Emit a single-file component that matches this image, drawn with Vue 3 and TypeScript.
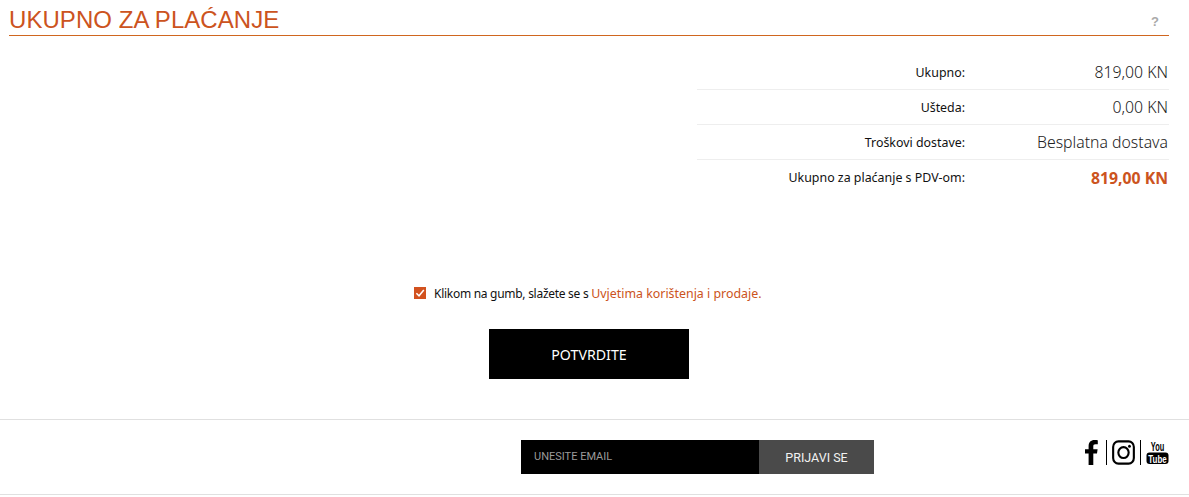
<template>
  <div class="page">
    <header class="head">
      <h1 class="title">UKUPNO ZA PLAĆANJE</h1>
      <span class="help">?</span>
    </header>

    <div class="summary">
      <div
        v-for="row in rows"
        :key="row.label"
        class="row"
        :class="{ 'row--total': row.total }"
      >
        <span class="label">{{ row.label }}</span>
        <span class="value">{{ row.value }}</span>
      </div>
    </div>

    <label class="terms">
      <span class="check">
        <svg width="10" height="10" viewBox="0 0 10 10">
          <path d="M1.4 5.2 4 7.8 8.8 2" fill="none" stroke="#fff" stroke-width="1.5" />
        </svg>
      </span>
      <span><span class="terms-text">Klikom na gumb, slažete se s </span><a class="link">Uvjetima korištenja i prodaje.</a></span>
    </label>

    <div class="confirm-wrap">
      <button class="confirm" type="button">POTVRDITE</button>
    </div>

    <footer class="foot">
      <form class="news" @submit.prevent>
        <div class="email">UNESITE EMAIL</div>
        <button class="subscribe" type="button">PRIJAVI SE</button>
      </form>
      <div class="social">
        <svg class="fb" width="13" height="25" viewBox="0 0 13 25">
          <path d="M3.6 25V13.6H0V9.2h3.6V6C3.6 2.2 5.9 0 9.4 0c1.6 0 3 .1 3.4.2v4h-2.3c-1.9 0-2.2.9-2.2 2.2v2.8h4.3l-.6 4.4H8.3V25z" fill="#000" />
        </svg>
        <i class="sep" />
        <svg class="ig" width="23" height="25" viewBox="0 0 24 25" preserveAspectRatio="none">
          <rect x="1.2" y="1.4" width="21.6" height="22.2" rx="5.5" fill="none" stroke="#000" stroke-width="2.2" />
          <circle cx="12" cy="12.6" r="5.4" fill="none" stroke="#000" stroke-width="2.2" />
          <circle cx="18.2" cy="6.2" r="1.5" fill="#000" />
        </svg>
        <i class="sep" />
        <svg class="yt" width="23" height="25" viewBox="0 0 23 25">
          <text transform="translate(11.5 10.5) scale(0.57 1)" text-anchor="middle" class="yt-you">You</text>
          <rect x="0.5" y="12.5" width="22" height="11.5" rx="3" fill="#000" />
          <text transform="translate(11.5 22.5) scale(0.72 1)" text-anchor="middle" class="yt-tube">Tube</text>
        </svg>
      </div>
    </footer>
  </div>
</template>

<script setup lang="ts">
interface Row {
  label: string
  value: string
  total?: boolean
}

const rows: Row[] = [
  { label: 'Ukupno:', value: '819,00 KN' },
  { label: 'Ušteda:', value: '0,00 KN' },
  { label: 'Troškovi dostave:', value: 'Besplatna dostava' },
  { label: 'Ukupno za plaćanje s PDV-om:', value: '819,00 KN', total: true },
]
</script>

<style scoped>
.page {
  width: 1189px;
  height: 497px;
  overflow: hidden;
  background: #fff;
  font-family: "Noto Sans", "Open Sans", sans-serif;
  color: #000;
}
.head {
  display: flex;
  justify-content: space-between;
  align-items: flex-start;
  height: 35px;
  margin: 0 20px 0 9px;
  border-bottom: 1px solid #d0661f;
  box-sizing: content-box;
}
.title {
  margin: 0;
  font: 400 24px/40px "Liberation Sans", Arial, sans-serif;
  letter-spacing: 0.05px;
  color: #cc5320;
}
.help {
  margin: 14px 10px 0 0;
  font: 700 13px/16px "Liberation Sans", Arial, sans-serif;
  color: #a9a9a9;
}
.summary {
  width: 472px;
  margin: 19px 20px 0 auto;
}
.row {
  display: flex;
  align-items: center;
  height: 35px;
  box-sizing: border-box;
  border-bottom: 1px solid #eee;
}
.row--total {
  border-bottom: 0;
}
.label {
  width: 268px;
  text-align: right;
  font-size: 12.4px;
  color: #111;
}
.value {
  flex: 1;
  padding-right: 1px;
  text-align: right;
  font-size: 15.8px;
  font-weight: 300;
  color: #222;
}
.row--total .value {
  font-weight: 700;
  color: #cc5320;
}
.terms {
  display: flex;
  align-items: center;
  gap: 8px;
  margin: 89px 0 0 414px;
  height: 18px;
  font-size: 12px;
  color: #111;
}
.terms-text {
  letter-spacing: -0.28px;
}
.check {
  display: flex;
  align-items: center;
  justify-content: center;
  width: 12px;
  height: 12px;
  background: #d2521f;
}
.link {
  font-size: 12.4px;
  color: #cc5320;
}
.confirm-wrap {
  display: flex;
  justify-content: center;
  width: 1178px;
  margin-top: 27px;
}
.confirm {
  width: 200px;
  height: 50px;
  border: 0;
  background: #000;
  color: #fff;
  font-family: "Noto Sans", sans-serif;
  font-size: 14.2px;
}
.foot {
  position: relative;
  display: flex;
  align-items: flex-start;
  height: 74px;
  margin-top: 40px;
  border-top: 1px solid #e0e0e0;
  border-bottom: 1px solid #e0e0e0;
}
.news {
  display: flex;
  height: 34px;
  margin: 20px 0 0 521px;
}
.email {
  width: 238px;
  padding-left: 13px;
  box-sizing: border-box;
  background: #000;
  color: #9a9a9a;
  font: 400 11px/34px Roboto, sans-serif;
}
.subscribe {
  width: 115px;
  border: 0;
  background: #4a4a4a;
  color: #f2f2f2;
  font: 400 12.5px Roboto, sans-serif;
}
.social {
  display: flex;
  align-items: center;
  height: 25px;
  margin: 20px 0 0 211px;
}
.sep {
  width: 1px;
  height: 25px;
  background: #000;
}
.fb {
  margin-right: 8px;
}
.ig {
  margin: 0 5px 0 5px;
}
.yt {
  margin-left: 5px;
  overflow: visible;
}
.yt-you {
  font: 700 13px "Liberation Sans", sans-serif;
  fill: #000;
}
.yt-tube {
  font: 700 11px "Liberation Sans", sans-serif;
  fill: #fff;
}
</style>
